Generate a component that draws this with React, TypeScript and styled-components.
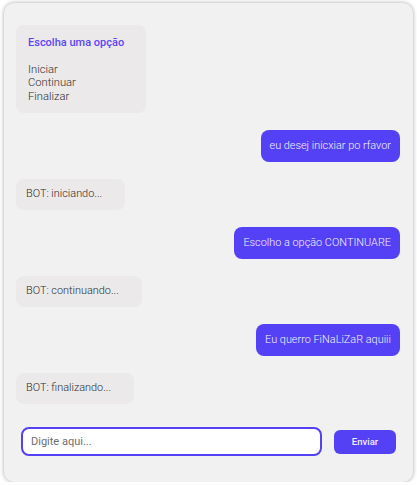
import React from "react";
import styled, { createGlobalStyle } from "styled-components";

const Global = createGlobalStyle`
  html, body { margin: 0; padding: 0; background: #ffffff; }
  body { font-family: Roboto, "Noto Sans", Arial, sans-serif; }
  * { box-sizing: border-box; }
`;

const Page = styled.div`
  padding: 3px 0 0 4px;
`;

const ChatBox = styled.div`
  width: 409px;
  height: 479px;
  background: #f1f1f1;
  border-radius: 10px;
  box-shadow: 0 0 4px rgba(0, 0, 0, 0.35);
  display: flex;
  flex-direction: column;
  overflow: hidden;
`;

const Messages = styled.div`
  display: flex;
  flex-direction: column;
  gap: 17px;
  padding: 22px 13px 0 12px;
`;

const Bubble = styled.div<{ $user?: boolean }>`
  align-self: ${(p) => (p.$user ? "flex-end" : "flex-start")};
  background: ${(p) => (p.$user ? "#5541f5" : "#ebe9e9")};
  color: ${(p) => (p.$user ? "#f2f0ff" : "#2e2e2e")};
  font-size: 10.9px;
  font-weight: 300;
  line-height: 14px;
  padding: ${(p) => (p.$user ? "9px 9px" : "8px 23px 9px 10px")};
  border-radius: 8px;
  white-space: nowrap;
`;

const MenuBubble = styled.div`
  align-self: flex-start;
  width: 130px;
  background: #ebe9e9;
  color: #2e2e2e;
  font-size: 11.2px;
  font-weight: 300;
  line-height: 13.4px;
  padding: 11px 12px 10px;
  border-radius: 8px;
`;

const MenuTitle = styled.div`
  color: #5b46f5;
  font-weight: 500;
  font-size: 11px;
  margin-bottom: 13.4px;
`;

const InputRow = styled.div`
  display: flex;
  align-items: center;
  gap: 12px;
  padding: 23px 17px 0 17px;
`;

const TextInput = styled.input`
  flex: 0 0 301px;
  height: 29px;
  border: 2px solid #5541f5;
  border-radius: 8px;
  background: #ffffff;
  padding: 0 8px;
  font-family: Roboto, Arial, sans-serif;
  font-size: 11px;
  color: #333;
  outline: none;
  &::placeholder { color: #6e6e6e; }
`;

const SendButton = styled.button`
  width: 62px;
  height: 24px;
  border: none;
  border-radius: 6px;
  background: #5541f5;
  color: #f0eeff;
  font-family: Roboto, Arial, sans-serif;
  font-size: 9.5px;
  font-weight: 500;
  padding: 0;
`;

const messages = [
  { user: true, text: "eu desej inicxiar po rfavor" },
  { user: false, text: "BOT: iniciando..." },
  { user: true, text: "Escolho a opção CONTINUARE" },
  { user: false, text: "BOT: continuando..." },
  { user: true, text: "Eu querro FiNaLiZaR aquiii" },
  { user: false, text: "BOT: finalizando..." },
];

export default function App() {
  return (
    <Page>
      <Global />
      <ChatBox>
        <Messages>
          <MenuBubble>
            <MenuTitle>Escolha uma opção</MenuTitle>
            <div>Iniciar</div>
            <div>Continuar</div>
            <div>Finalizar</div>
          </MenuBubble>
          {messages.map((m, i) => (
            <Bubble key={i} $user={m.user}>
              {m.text}
            </Bubble>
          ))}
        </Messages>
        <InputRow>
          <TextInput placeholder="Digite aqui..." />
          <SendButton>Enviar</SendButton>
        </InputRow>
      </ChatBox>
    </Page>
  );
}
